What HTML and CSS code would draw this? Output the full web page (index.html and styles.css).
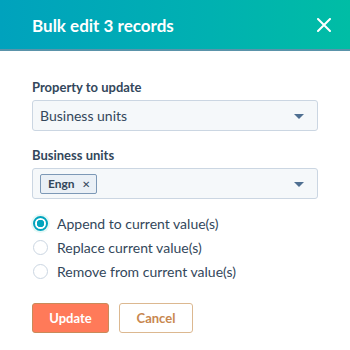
FILE: index.html
```html
<!doctype html>
<html lang="en">
  <head>
    <meta charset="UTF-8" />
    <title>Bulk edit</title>
    <link rel="stylesheet" href="styles.css">
  </head>
  <body>
    <div class="modal">
      <header class="modal-header">
        <h1 class="modal-title">Bulk edit 3 records</h1>
        <button class="close-button" aria-label="Close">
          <svg width="14" height="14" viewBox="0 0 14 14">
            <path d="M1 1L13 13M13 1L1 13" stroke="#fff" stroke-width="2" stroke-linecap="round" />
          </svg>
        </button>
      </header>

      <div class="modal-body">
        <div class="form-group">
          <label class="field-label">Property to update</label>
          <div class="select">
            <span class="select-value">Business units</span>
            <span class="caret"></span>
          </div>
        </div>

        <div class="form-group">
          <label class="field-label">Business units</label>
          <div class="select">
            <span class="tag">Engn <span class="tag-remove">&#x2715;</span></span>
            <span class="caret"></span>
          </div>
        </div>

        <div class="radio-list">
          <label class="radio-row">
            <span class="radio checked"></span>
            Append to current value(s)
          </label>
          <label class="radio-row">
            <span class="radio"></span>
            Replace current value(s)
          </label>
          <label class="radio-row">
            <span class="radio"></span>
            Remove from current value(s)
          </label>
        </div>

        <div class="actions">
          <button class="btn btn-primary">Update</button>
          <button class="btn btn-secondary">Cancel</button>
        </div>
      </div>
    </div>
  </body>
</html>
```

FILE: styles.css
```css
:root {
  --text-color: #33475b;
  --border-color: #cbd6e2;
  --field-bg: #f5f8fa;
  --orange: #ff7a59;
}

* {
  margin: 0;
  padding: 0;
  box-sizing: border-box;
}

body {
  font-family: Lato, 'Noto Sans', sans-serif;
  color: var(--text-color);
  background: #fff;
  width: 350px;
  height: 350px;
  overflow: hidden;
}

.modal-header {
  height: 51px;
  background: linear-gradient(90deg, #00a2bd 0%, #00b1b1 60%, #00bda5 100%);
  border-bottom: 2px solid #5a93aa;
  display: flex;
  align-items: center;
  justify-content: space-between;
  padding: 0 19px 0 32px;
}

.modal-title {
  color: #fff;
  font-size: 17px;
  font-weight: 700;
  margin-top: 2px;
}

.close-button {
  background: none;
  border: none;
  display: flex;
  padding: 0;
  margin-top: 1px;
}

.modal-body {
  padding: 28px 32px 0;
}

.form-group {
  margin-bottom: 16px;
}

.field-label {
  display: block;
  font-size: 13px;
  font-weight: 700;
  margin-bottom: 5px;
}

.select {
  height: 31px;
  background: var(--field-bg);
  border: 1px solid var(--border-color);
  border-radius: 3px;
  display: flex;
  align-items: center;
  justify-content: space-between;
  padding: 0 13px 0 7px;
}

.select-value {
  font-size: 14px;
}

.caret {
  width: 0;
  height: 0;
  border-left: 5px solid transparent;
  border-right: 5px solid transparent;
  border-top: 5px solid #4f6f91;
  margin-top: 2px;
}

.tag {
  display: inline-flex;
  align-items: center;
  gap: 7px;
  height: 20px;
  padding: 0 6px 0 7px;
  background: #eaf0f6;
  border: 1px solid #7c98b6;
  border-radius: 2px;
  font-size: 12px;
  font-weight: 700;
}

.tag-remove {
  font-size: 10px;
  font-weight: 400;
}

.radio-list {
  display: flex;
  flex-direction: column;
  gap: 8px;
  margin-top: 12px;
  padding-left: 1px;
}

.radio-row {
  display: flex;
  align-items: center;
  gap: 9px;
  font-size: 14px;
  height: 16px;
}

.radio {
  width: 15px;
  height: 15px;
  border: 1px solid var(--border-color);
  border-radius: 50%;
  background: #fff;
}

.radio.checked {
  border: 2px solid #00a4bd;
  background: radial-gradient(circle, #00a4bd 0 3.5px, #fff 4px);
  box-shadow: 0 0 0 2px #e5f8f6;
}

.actions {
  display: flex;
  gap: 10px;
  margin-top: 24px;
}

.btn {
  height: 30px;
  border-radius: 3px;
  font-family: inherit;
  font-size: 13px;
  font-weight: 700;
  cursor: pointer;
}

.btn-primary {
  width: 77px;
  background: var(--orange);
  border: 1px solid #c98a59;
  color: #fff;
}

.btn-secondary {
  width: 74px;
  background: #fff;
  border: 1px solid #dcb890;
  color: #c8874f;
}
```
